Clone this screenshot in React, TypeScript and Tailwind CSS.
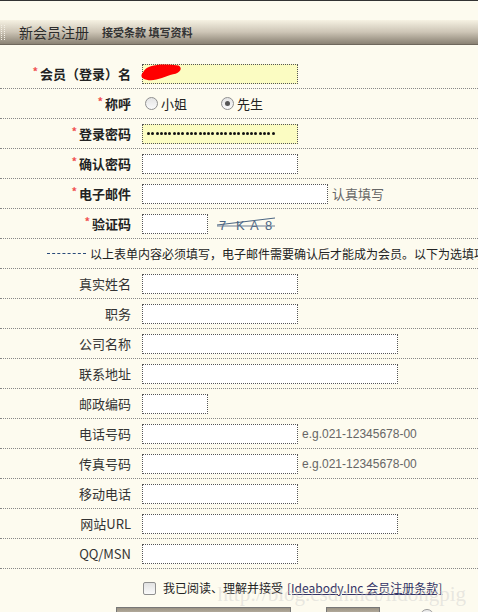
import React from 'react';

const font = { fontFamily: '"Noto Sans CJK SC", "Noto Sans", sans-serif' };

const inputBase = 'h-[20px] border border-dotted border-[#555] outline-none';

type RowProps = { label: React.ReactNode; required?: boolean; children?: React.ReactNode };

const Row: React.FC<RowProps> = ({ label, required, children }) => (
  <div className="flex h-[30px] items-center border-b border-dotted border-[#888]">
    <div className={`w-[131px] shrink-0 text-right text-[13px] ${required ? 'font-bold text-[#222]' : 'text-[#333]'}`}>
      {required && <span className="relative -top-[3px] mr-[2px] text-[11px] font-bold text-[#f05050]">*</span>}
      {label}
    </div>
    <div className="ml-[11px] flex items-center gap-[4px]">{children}</div>
  </div>
);

const Radio: React.FC<{ checked?: boolean; label: string }> = ({ checked, label }) => (
  <label className="flex items-center gap-[3px] text-[13px] text-[#222]">
    <span className="flex h-[13px] w-[13px] items-center justify-center rounded-full border border-[#8f8f8f] bg-gradient-to-b from-[#e4e4e4] to-[#fafafa]">
      {checked && <span className="h-[5px] w-[5px] rounded-full bg-[#555]" />}
    </span>
    {label}
  </label>
);

const Captcha = () => (
  <svg width="70" height="20" viewBox="0 0 70 20" className="ml-[5px]">
    <text y="16" fontSize="13" fill="#4a6482" fontFamily="Liberation Sans, sans-serif">
      <tspan x="2">7</tspan>
      <tspan x="19">K</tspan>
      <tspan x="33">A</tspan>
      <tspan x="48">8</tspan>
    </text>
    <line x1="0" y1="11" x2="58" y2="4" stroke="#4a6482" strokeWidth="1" />
    <line x1="0" y1="12" x2="58" y2="12" stroke="#6c7f95" strokeWidth="1.2" />
  </svg>
);

const dots = Array.from({ length: 30 });

export default function App() {
  return (
    <div className="relative h-[612px] w-[478px] overflow-hidden border-t border-[#333] bg-[#fdfbef]" style={font}>
      <div className="mt-[19px] flex h-[25px] items-center border-b border-[#6e675c] bg-gradient-to-b from-[#f6f2e3] via-[#cdc5b6] to-[#8a8274]">
        <div className="ml-[1px] h-[15px] w-[4px] border-x border-dotted border-[#f4f0e6]" />
        <span className="ml-[14px] text-[14px] text-[#2b2b2b]">新会员注册</span>
        <span className="ml-[13px] text-[11px] font-bold text-[#333]">接受条款 填写资料</span>
      </div>

      <div className="mt-[14px] w-[640px]">
        <Row label="会员（登录）名" required>
          <div className={`${inputBase} relative w-[156px] bg-[#fbfcc2]`}>
            <svg width="44" height="24" viewBox="0 0 40 18" className="absolute -left-[3px] -top-[5px]">
              <path d="M3 9 C6 2, 20 1, 35 3 C39 5, 37 10, 30 11 C22 13, 14 18, 6 16 C1 15, 0 12, 3 9 Z" fill="#ff0000" />
            </svg>
          </div>
        </Row>
        <Row label="称呼" required>
          <div className="flex items-center gap-[34px] pl-[3px]">
            <Radio label="小姐" />
            <Radio label="先生" checked />
          </div>
        </Row>
        <Row label="登录密码" required>
          <div className={`${inputBase} flex w-[156px] items-center gap-[1.3px] bg-[#fbfcc2] pl-[4px]`}>
            {dots.map((_, i) => (
              <span key={i} className="h-[3px] w-[3px] rounded-full bg-[#111]" />
            ))}
          </div>
        </Row>
        <Row label="确认密码" required>
          <div className={`${inputBase} w-[156px] bg-white`} />
        </Row>
        <Row label="电子邮件" required>
          <div className={`${inputBase} w-[186px] bg-white`} />
          <span className="text-[13px] text-[#666]">认真填写</span>
        </Row>
        <Row label="验证码" required>
          <div className={`${inputBase} w-[66px] bg-white`} />
          <Captcha />
        </Row>
        <div className="flex h-[30px] items-center whitespace-nowrap border-b border-dotted border-[#888] pl-[47px] text-[12px] text-[#222]">
          <span className="mr-[4px] w-[39px] border-t border-dashed border-[#2a4a7a]" />
          以上表单内容必须填写，电子邮件需要确认后才能成为会员。以下为选填项
        </div>
        <Row label="真实姓名"><div className={`${inputBase} w-[156px] bg-white`} /></Row>
        <Row label="职务"><div className={`${inputBase} w-[156px] bg-white`} /></Row>
        <Row label="公司名称"><div className={`${inputBase} w-[256px] bg-white`} /></Row>
        <Row label="联系地址"><div className={`${inputBase} w-[256px] bg-white`} /></Row>
        <Row label="邮政编码"><div className={`${inputBase} w-[66px] bg-white`} /></Row>
        <Row label="电话号码">
          <div className={`${inputBase} w-[156px] bg-white`} />
          <span className="text-[12px] text-[#666]" style={{ fontFamily: '"Liberation Sans", sans-serif' }}>e.g.021-12345678-00</span>
        </Row>
        <Row label="传真号码">
          <div className={`${inputBase} w-[156px] bg-white`} />
          <span className="text-[12px] text-[#666]" style={{ fontFamily: '"Liberation Sans", sans-serif' }}>e.g.021-12345678-00</span>
        </Row>
        <Row label="移动电话"><div className={`${inputBase} w-[156px] bg-white`} /></Row>
        <Row label="网站URL"><div className={`${inputBase} w-[256px] bg-white`} /></Row>
        <Row label="QQ/MSN"><div className={`${inputBase} w-[156px] bg-white`} /></Row>

        <div className="flex h-[38px] items-center whitespace-nowrap pl-[143px] text-[12px] text-[#222]">
          <span className="h-[13px] w-[13px] rounded-[2px] border border-[#8f8f8f] bg-gradient-to-b from-[#e2e2e2] to-[#fafafa]" />
          <span className="ml-[7px]">我已阅读、理解并接受</span>
          <span className="ml-[4px] text-[#333366] underline">[Ideabody.Inc 会员注册条款]</span>
        </div>
        <div className="flex items-start">
          <div className="ml-[116px] h-[10px] w-[175px] border border-[#777] bg-gradient-to-b from-[#9a9284] to-[#c9c1b1]" />
          <div className="ml-[35px] h-[10px] w-[54px] border border-[#777] bg-gradient-to-b from-[#9a9284] to-[#c9c1b1]" />
          <div className="ml-[40px] mt-[2px] h-[14px] w-[14px] rounded-full border border-[#999] bg-[#eee]" />
        </div>
      </div>

      <div className="pointer-events-none absolute right-[12px] top-[578px] whitespace-nowrap text-[21px] text-[#c8c8c8]/40" style={{ fontFamily: '"Liberation Serif", serif' }}>
        http://blog.csdn.net/lidongpig
      </div>
    </div>
  );
}
